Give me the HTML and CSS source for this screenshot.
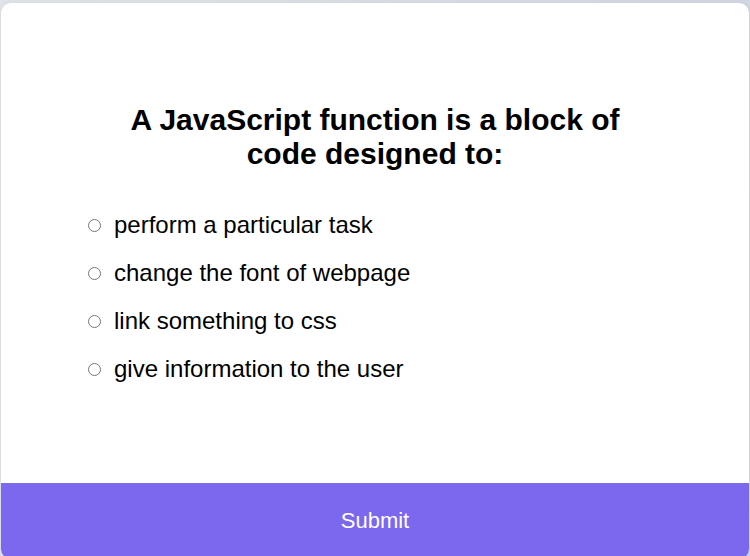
FILE: index.html
```html
<!DOCTYPE html>
<html lang="en">
<head>
<meta charset="UTF-8">
<title>Quiz App</title>
<link rel="stylesheet" href="styles.css">
</head>
<body>
  <div class="quiz">
    <div class="quiz-header">
      <h2 class="question">A JavaScript function is a block of code designed to:</h2>
      <ul class="answers">
        <li class="answer"><input type="radio" name="answer" id="a" class="radio"><label for="a">perform a particular task</label></li>
        <li class="answer"><input type="radio" name="answer" id="b" class="radio"><label for="b">change the font of webpage</label></li>
        <li class="answer"><input type="radio" name="answer" id="c" class="radio"><label for="c">link something to css</label></li>
        <li class="answer"><input type="radio" name="answer" id="d" class="radio"><label for="d">give information to the user</label></li>
      </ul>
    </div>
    <button class="submit">Submit</button>
  </div>
</body>
</html>
```
FILE: styles.css
```css
* { box-sizing: border-box; }
html, body { height: 100%; }
body {
  margin: 0;
  font-family: "Liberation Sans", Arial, sans-serif;
  background: linear-gradient(100deg, #e4e7ec 0%, #dce1e9 50%, #d1d9e5 100%);
  overflow: hidden;
}
.quiz {
  margin: 3px 1px 0;
  height: 556px;
  background: #fff;
  border-radius: 10px;
  overflow: hidden;
  display: flex;
  flex-direction: column;
  box-shadow: 0 0 10px 2px rgba(100, 100, 100, 0.1);
}
.quiz-header {
  flex: 1;
  padding-top: 100px;
}
.question {
  margin: 0 auto;
  width: 520px;
  text-align: center;
  font-size: 30px;
  line-height: 34px;
  font-weight: bold;
  color: #000;
}
.answers {
  list-style: none;
  margin: 40px 0 0;
  padding: 0 0 0 87px;
  display: flex;
  flex-direction: column;
  gap: 20px;
}
.answer {
  display: flex;
  align-items: center;
  gap: 13px;
  font-size: 24px;
  line-height: 28px;
  color: #000;
}
.radio {
  margin: 0;
  width: 13px;
  height: 13px;
}
.submit {
  display: block;
  width: 100%;
  height: 73px;
  margin-bottom: 3px;
  border: none;
  background: #7b68ee;
  color: #fff;
  font-family: inherit;
  font-size: 22px;
  padding: 2px 0 0;
  cursor: pointer;
}
```
